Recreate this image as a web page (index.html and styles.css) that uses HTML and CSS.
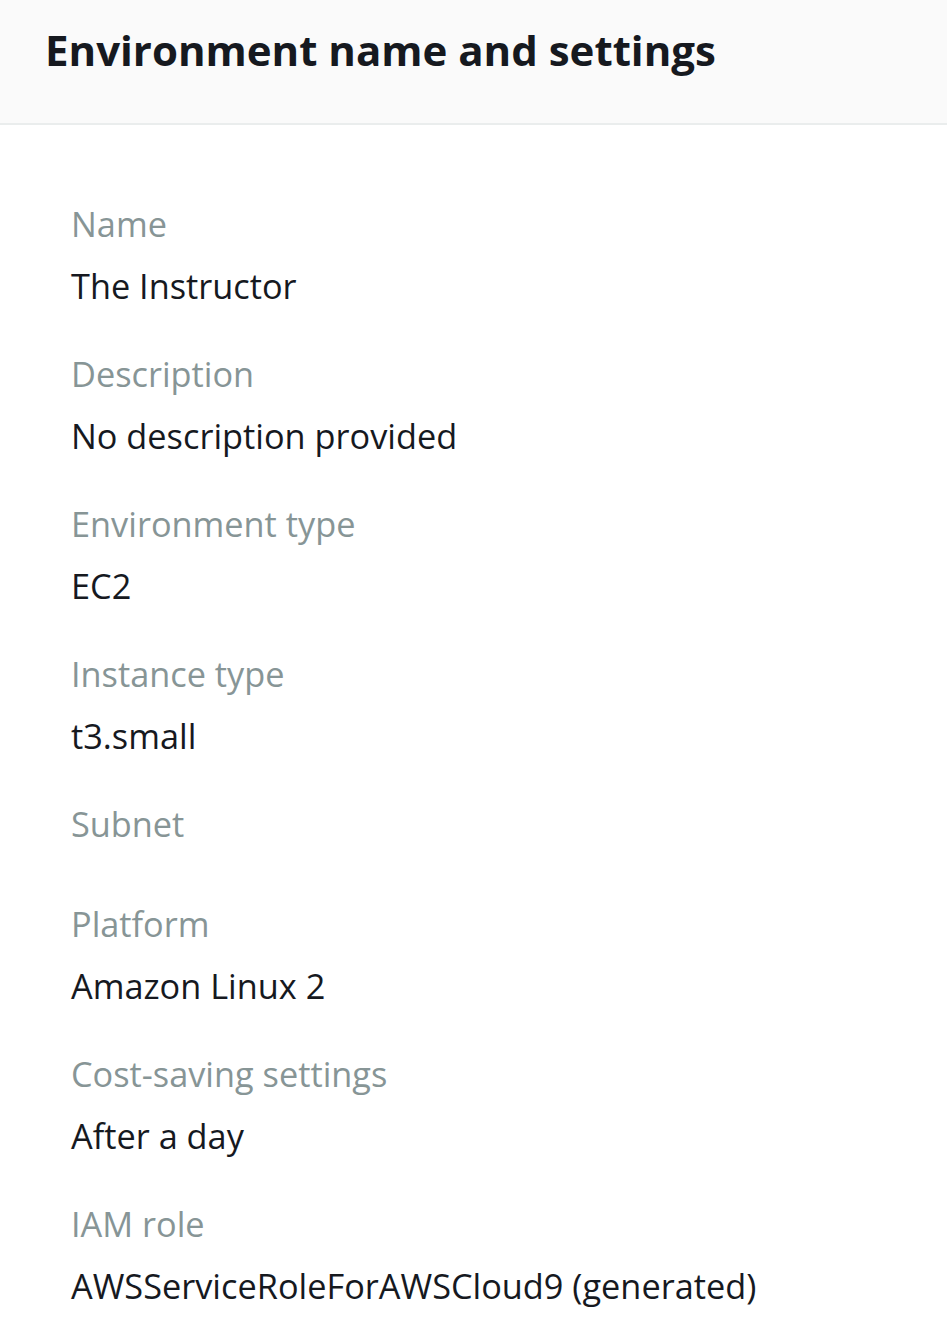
FILE: index.html
```html
<!DOCTYPE html>
<html>
<head>
<meta charset="utf-8">
<link rel="stylesheet" href="styles.css">
</head>
<body>
<div class="panel">
  <div class="header"><h2 class="title">Environment name and settings</h2></div>
  <div class="content">
    <div class="field"><div class="label">Name</div><div class="value">The Instructor</div></div>
    <div class="field"><div class="label">Description</div><div class="value">No description provided</div></div>
    <div class="field"><div class="label">Environment type</div><div class="value">EC2</div></div>
    <div class="field"><div class="label">Instance type</div><div class="value">t3.small</div></div>
    <div class="field"><div class="label">Subnet</div><div class="value"></div></div>
    <div class="field"><div class="label">Platform</div><div class="value">Amazon Linux 2</div></div>
    <div class="field"><div class="label">Cost-saving settings</div><div class="value">After a day</div></div>
    <div class="field"><div class="label">IAM role</div><div class="value">AWSServiceRoleForAWSCloud9 (generated)</div></div>
  </div>
</div>
</body>
</html>
```
FILE: styles.css
```css
html, body { margin: 0; padding: 0; background: #ffffff; }
body { font-family: "Open Sans", "Noto Sans", sans-serif; color: #16191f; }
.header {
  background: #fafafa;
  border-bottom: 2px solid #eaeded;
  box-sizing: border-box;
  height: 125px;
  padding: 24px 0 0 45px;
}
.title { margin: 0; font-size: 42px; font-weight: 700; line-height: 52px; color: #16191f; }
.content { padding: 74px 0 0 71px; }
.field { display: flex; flex-direction: column; gap: 12px; margin-bottom: 38px; }
.label { font-size: 34.3px; line-height: 50px; color: #879596; }
.value { font-size: 34.3px; line-height: 50px; color: #16191f; }
.value:empty { height: 0; }
```
